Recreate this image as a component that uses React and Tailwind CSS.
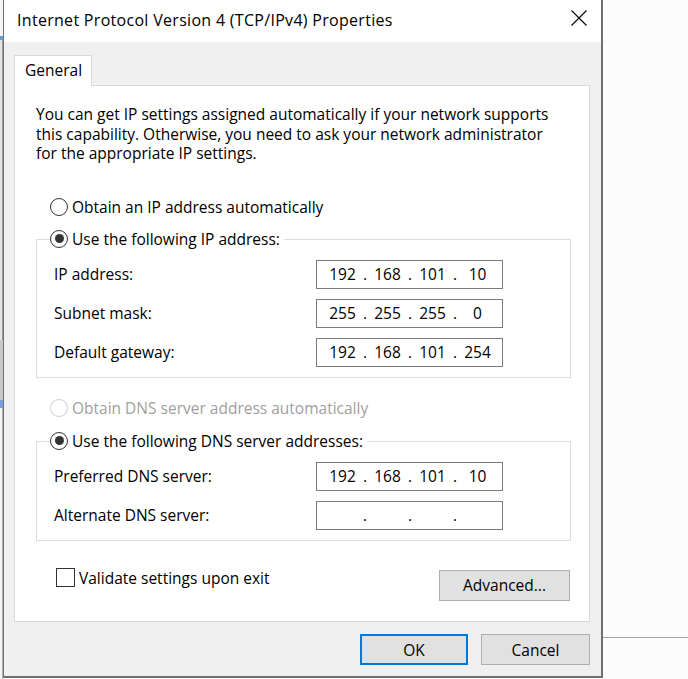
import React from "react";

function Radio({ checked = false, disabled = false }) {
  return (
    <span
      className={
        "w-[18px] h-[18px] rounded-full border flex items-center justify-center bg-white shrink-0 " +
        (disabled ? "border-[#cccccc]" : "border-[#333333]")
      }
    >
      {checked && <span className="w-[9px] h-[9px] rounded-full bg-[#333333]" />}
    </span>
  );
}

function IpField({ parts }) {
  return (
    <div className="w-[187px] h-[29px] border border-[#7a7a7a] bg-white flex items-center pl-[7px]">
      {parts.map((p, i) => (
        <React.Fragment key={i}>
          <span className="w-[37px] text-center leading-[20px]">{p}</span>
          {i < 3 && <span className="w-[8px] text-center leading-[20px]">.</span>}
        </React.Fragment>
      ))}
    </div>
  );
}

function FieldRow({ label, parts }) {
  return (
    <div className="flex items-center">
      <span className="w-[262px] leading-[20px]">{label}</span>
      <IpField parts={parts} />
    </div>
  );
}

export default function App() {
  return (
    <div className="w-[688px] h-[679px] flex bg-[#fcfcfc] overflow-hidden font-['Open_Sans',sans-serif] text-[15.5px] text-black">
      {/* background window sliver */}
      <div className="w-[3px] h-full bg-[#eeeeee] flex flex-col">
        <div className="h-[36px] bg-[#f6f6f6]" />
        <div className="h-[4px] bg-[#6a9bd1]" />
        <div className="h-[300px] bg-[#e4e4e4] border-r border-[#9a9a9a]" />
        <div className="h-[60px] bg-[#c8c8c8]" />
        <div className="h-[8px] bg-[#7aa0d8]" />
        <div className="flex-1 bg-[#f2f2f2] border-r border-[#b0b0b0]" />
      </div>

      {/* dialog */}
      <div className="w-[600px] h-[678px] border-l border-r-2 border-b-2 border-[#6f6f6f] flex flex-col bg-[#f0f0f0]">
        {/* title bar */}
        <div className="h-[42px] bg-white flex justify-between pl-[13px] pr-[14px]">
          <span className="mt-[9px] leading-[22px] text-[16px] tracking-[0.3px]">
            Internet Protocol Version 4 (TCP/IPv4) Properties
          </span>
          <svg width="16" height="16" viewBox="0 0 16 16" className="mt-[10px]">
            <path d="M0.5 0.5 L15.5 15.5 M15.5 0.5 L0.5 15.5" stroke="#000" strokeWidth="1.1" fill="none" />
          </svg>
        </div>

        {/* body */}
        <div className="flex-1 pt-[13px] pl-[10px] pr-[10px] flex flex-col">
          <div className="flex">
            <div className="relative z-10 -mb-px h-[31px] w-[78px] bg-white border-t border-l border-r border-[#d9d9d9] pl-[10px] pt-[4px] leading-[20px]">
              General
            </div>
          </div>

          <div className="w-[576px] h-[537px] bg-white border border-[#d9d9d9] pl-[21px] pt-[19px] flex flex-col">
            <p className="leading-[19.5px]">
              You can get IP settings assigned automatically if your network supports
              <br />
              this capability. Otherwise, you need to ask your network administrator
              <br />
              for the appropriate IP settings.
            </p>

            <div className="mt-[33px] ml-[14px] h-[20px] flex items-center gap-[4px]">
              <Radio />
              <span className="leading-[20px]">Obtain an IP address automatically</span>
            </div>

            <div className="mt-[22px] w-[535px] border border-[#dcdcdc] flex flex-col pl-[17px] pb-[10px]">
              <div className="-mt-[11px] ml-[-4px] self-start bg-white pr-[4px] h-[20px] flex items-center gap-[4px]">
                <Radio checked />
                <span className="leading-[20px]">Use the following IP address:</span>
              </div>
              <div className="mt-[11px] flex flex-col gap-[10px]">
                <FieldRow label="IP address:" parts={["192", "168", "101", "10"]} />
                <FieldRow label="Subnet mask:" parts={["255", "255", "255", "0"]} />
                <FieldRow label="Default gateway:" parts={["192", "168", "101", "254"]} />
              </div>
            </div>

            <div className="mt-[20px] ml-[14px] h-[20px] flex items-center gap-[4px]">
              <Radio disabled />
              <span className="leading-[20px] text-[#a0a0a0]">Obtain DNS server address automatically</span>
            </div>

            <div className="mt-[23px] w-[535px] border border-[#dcdcdc] flex flex-col pl-[17px] pb-[10px]">
              <div className="-mt-[11px] ml-[-4px] self-start bg-white pr-[4px] h-[20px] flex items-center gap-[4px]">
                <Radio checked />
                <span className="leading-[20px]">Use the following DNS server addresses:</span>
              </div>
              <div className="mt-[11px] flex flex-col gap-[10px]">
                <FieldRow label="Preferred DNS server:" parts={["192", "168", "101", "10"]} />
                <FieldRow label="Alternate DNS server:" parts={["", "", "", ""]} />
              </div>
            </div>

            <div className="mt-[27px] w-[534px] flex items-start justify-between">
              <div className="ml-[20px] flex items-center gap-[4px] h-[20px]">
                <span className="w-[19px] h-[19px] border border-[#333333] bg-white" />
                <span className="leading-[20px]">Validate settings upon exit</span>
              </div>
              <button className="mt-[2px] w-[131px] h-[31px] bg-[#e1e1e1] border border-[#adadad] leading-[20px]">
                Advanced...
              </button>
            </div>
          </div>

          <div className="mt-[12px] w-[576px] flex justify-end gap-[13px]">
            <button className="w-[108px] h-[31px] bg-[#e1e1e1] border-2 border-[#0078d7] leading-[20px]">
              OK
            </button>
            <button className="w-[109px] h-[31px] bg-[#e1e1e1] border border-[#adadad] leading-[20px]">
              Cancel
            </button>
          </div>
        </div>
      </div>

      {/* right background */}
      <div className="flex-1 flex flex-col">
        <div className="h-[637px]" />
        <div className="h-px bg-[#a8a8a8]" />
      </div>
    </div>
  );
}
